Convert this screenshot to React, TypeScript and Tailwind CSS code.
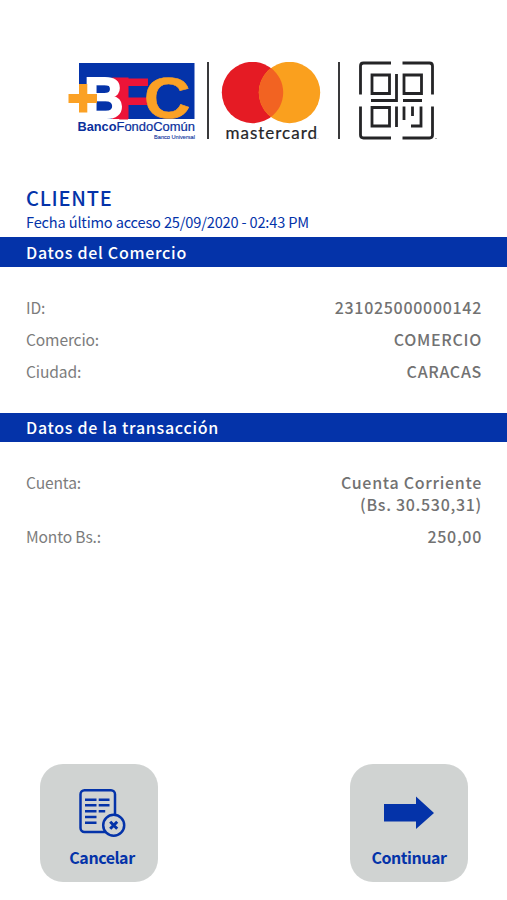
import { ReactNode } from "react";
import { clsx } from "clsx";

const commerce = [
     { label: "ID:", lines: ["231025000000142"] },
     { label: "Comercio:", lines: ["COMERCIO"] },
     { label: "Ciudad:", lines: ["CARACAS"] },
];

const transaction = [
     { label: "Cuenta:", lines: ["Cuenta Corriente", "(Bs. 30.530,31)"] },
     { label: "Monto Bs.:", lines: ["250,00"] },
];

function BfcLogo() {
     return (
          <svg className="h-20 w-32" viewBox="68 62 128 80">
               <rect x="79" y="63" width="115.500" height="56" fill="#0433a9" />
               <rect x="79" y="84" width="9" height="35.500" fill="#fff" />
               {/* Red field behind the B, shared with the F stem */}
               <rect x="112" y="77.500" width="16.500" height="41.500" fill="#ec1438" />
               <g fontFamily="'Liberation Sans', Arial, sans-serif" fontWeight="700">
                    <text x="116" y="118.500" fontSize="58" textLength="33.500" lengthAdjust="spacingAndGlyphs" fill="#ec1438" stroke="#ec1438" strokeWidth="1">F</text>
                    <text x="84" y="118" fontSize="58" textLength="39.500" lengthAdjust="spacingAndGlyphs" fill="#fff" stroke="#fff" strokeWidth="2">B</text>
                    <text x="144" y="118" fontSize="57.500" textLength="46.500" lengthAdjust="spacingAndGlyphs" fill="#fba125" stroke="#fba125" strokeWidth="0.600">C</text>
                    <text x="77.500" y="131" fontSize="12.500" textLength="39" lengthAdjust="spacingAndGlyphs" fill="#0a2f9c">Banco</text>
               </g>
               <path d="M79 84h8.300v10h9.700v9h-9.700v9.500h-8.300v-9.500h-10.500v-9h10.500z" fill="#fba125" />
               <g fontFamily="'Liberation Sans', Arial, sans-serif" fill="#0a2f9c">
                    <text x="116.500" y="131" fontSize="12.500" textLength="78.500" lengthAdjust="spacingAndGlyphs" stroke="#0a2f9c" strokeWidth="0.200">FondoComún</text>
                    <text x="154" y="139" fontSize="5" textLength="41" lengthAdjust="spacingAndGlyphs" stroke="#0a2f9c" strokeWidth="0.100">Banco Universal</text>
               </g>
          </svg>
     );
}

function MastercardLogo() {
     return (
          <svg className="h-20 w-[100px]" viewBox="221 62 100 80">
               <circle cx="252.500" cy="92.500" r="30.700" fill="#e51b24" />
               <circle cx="289.500" cy="92.500" r="30.700" fill="#faa01e" />
               <path d="M271 68a30.700 30.700 0 0 1 0 49a30.700 30.700 0 0 1 0-49z" fill="#f26322" />
               <text x="225.500" y="139" fontSize="17" fontFamily="Lato, sans-serif" textLength="91.500" fill="#252528" stroke="#252528" strokeWidth="0.200">mastercard</text>
               <circle cx="318" cy="138.500" r="0.400" fill="#777" />
          </svg>
     );
}

function QrIcon() {
     return (
          <svg className="h-20 w-20" viewBox="358 61 80 80" fill="none" stroke="#242426" strokeWidth="2.800">
               <path d="M360.500 94.500V66q0-3 3-3H391M402.500 63H429.500q3 0 3 3V94.500M432.500 106.500V135q0 3-3 3H402.500M391 138H363.500q-3 0-3-3V106.500" />
               <path d="M372 75h17.500v18.500H372zM404 75h17.500v18.500H404zM372 107.500h17.500v18.500H372z" />
               <path d="M396.500 74V100.500H371M403 100.500H422M396.500 106.500V127M404 106.500V120M412.500 106.500V116M421 106.500V126H411" />
               <path d="M435 138.500h2" strokeWidth="0.700" stroke="#888" />
          </svg>
     );
}

function SectionBar({ children, className }: { children: ReactNode; className?: string }) {
     return (
          <h2 className={clsx("bg-[#0433a9] pl-[26px] text-base font-medium tracking-[0.71px] text-white", className)}>
               {children}
          </h2>
     );
}

function Rows({ items }: { items: typeof commerce }) {
     return (
          <dl className="flex flex-col gap-[10px] pl-[26px] pr-[25px] text-base leading-[22px]">
               {items.map((item) => (
                    <div key={item.label} className="flex justify-between">
                         <dt className="text-[15.6px] tracking-[-0.15px] text-[#7c7c7c]">{item.label}</dt>
                         <dd className="text-right font-medium tracking-[0.7px] text-[#727272]">
                              {item.lines.map((line) => (
                                   <div key={line}>{line}</div>
                              ))}
                         </dd>
                    </div>
               ))}
          </dl>
     );
}

function ActionButton({ label, children, className }: { label: string; children: ReactNode; className?: string }) {
     return (
          <button className="flex h-[118px] w-[118px] flex-col items-center rounded-[23px] bg-[#d0d3d2] pt-6 text-base font-bold leading-[22px] tracking-[-0.45px] text-[#0433a9]">
               <span className="h-[50px]">{children}</span>
               <span className={clsx("mt-2", className)}>{label}</span>
          </button>
     );
}

export default function App() {
     return (
          <main className="flex h-[900px] w-[507px] flex-col bg-white pb-[18px] font-['Noto_Sans_CJK_SC','Noto_Sans',sans-serif]">
               <header className="flex h-[181px] pl-[68px] pt-[62px]">
                    <BfcLogo />
                    <div className="ml-[11px] h-[77px] w-[2px] bg-[#39393b]" />
                    <div className="ml-3">
                         <MastercardLogo />
                    </div>
                    <div className="ml-[17px] h-[77px] w-[2px] bg-[#39393b]" />
                    <div className="-mt-px ml-[18px]">
                         <QrIcon />
                    </div>
               </header>

               <div className="h-14 pl-[26px] pt-1 text-[#0433a9]">
                    <h1 className="text-xl font-medium leading-[26px] tracking-[0.75px]">CLIENTE</h1>
                    <p className="text-[14.6px] leading-[22px] tracking-[-0.17px]">Fecha último acceso 25/09/2020 - 02:43 PM</p>
               </div>

               <SectionBar className="mb-[29px] h-[30px] leading-[30px]">Datos del Comercio</SectionBar>
               <Rows items={commerce} />

               <SectionBar className="mb-[29px] mt-[31px] h-[29px] leading-[29px]">Datos de la transacción</SectionBar>
               <Rows items={transaction} />

               <footer className="mt-auto flex justify-between pl-10 pr-[39px]">
                    <ActionButton label="Cancelar" className="ml-[6px]">
                         <svg className="ml-1 h-[50px] w-[50px]" viewBox="0 0 50 50" fill="none" stroke="#0433a9" strokeWidth="2.500">
                              <rect x="4.500" y="2.300" width="34.500" height="41.700" rx="4" />
                              <path d="M9 11.700h11.500M9 17.300h11.500M9 23.200h11.500M9 29h11.500M9 34.700h11.500M22.700 11.700h10.800M22.700 17.300h10.800M22.700 23.200h6.500" />
                              <circle cx="37.700" cy="37.300" r="10.500" fill="#d0d3d2" />
                              <path d="M34.200 33.800l7 7M41.200 33.800l-7 7" strokeWidth="3" />
                         </svg>
                    </ActionButton>
                    <ActionButton label="Continuar">
                         <svg className="h-[50px] w-[50px]" viewBox="0 0 50 50">
                              <path d="M0 16h32V8.500L50 25L32 41V33.500H0z" fill="#0433a9" />
                         </svg>
                    </ActionButton>
               </footer>
          </main>
     );
}
